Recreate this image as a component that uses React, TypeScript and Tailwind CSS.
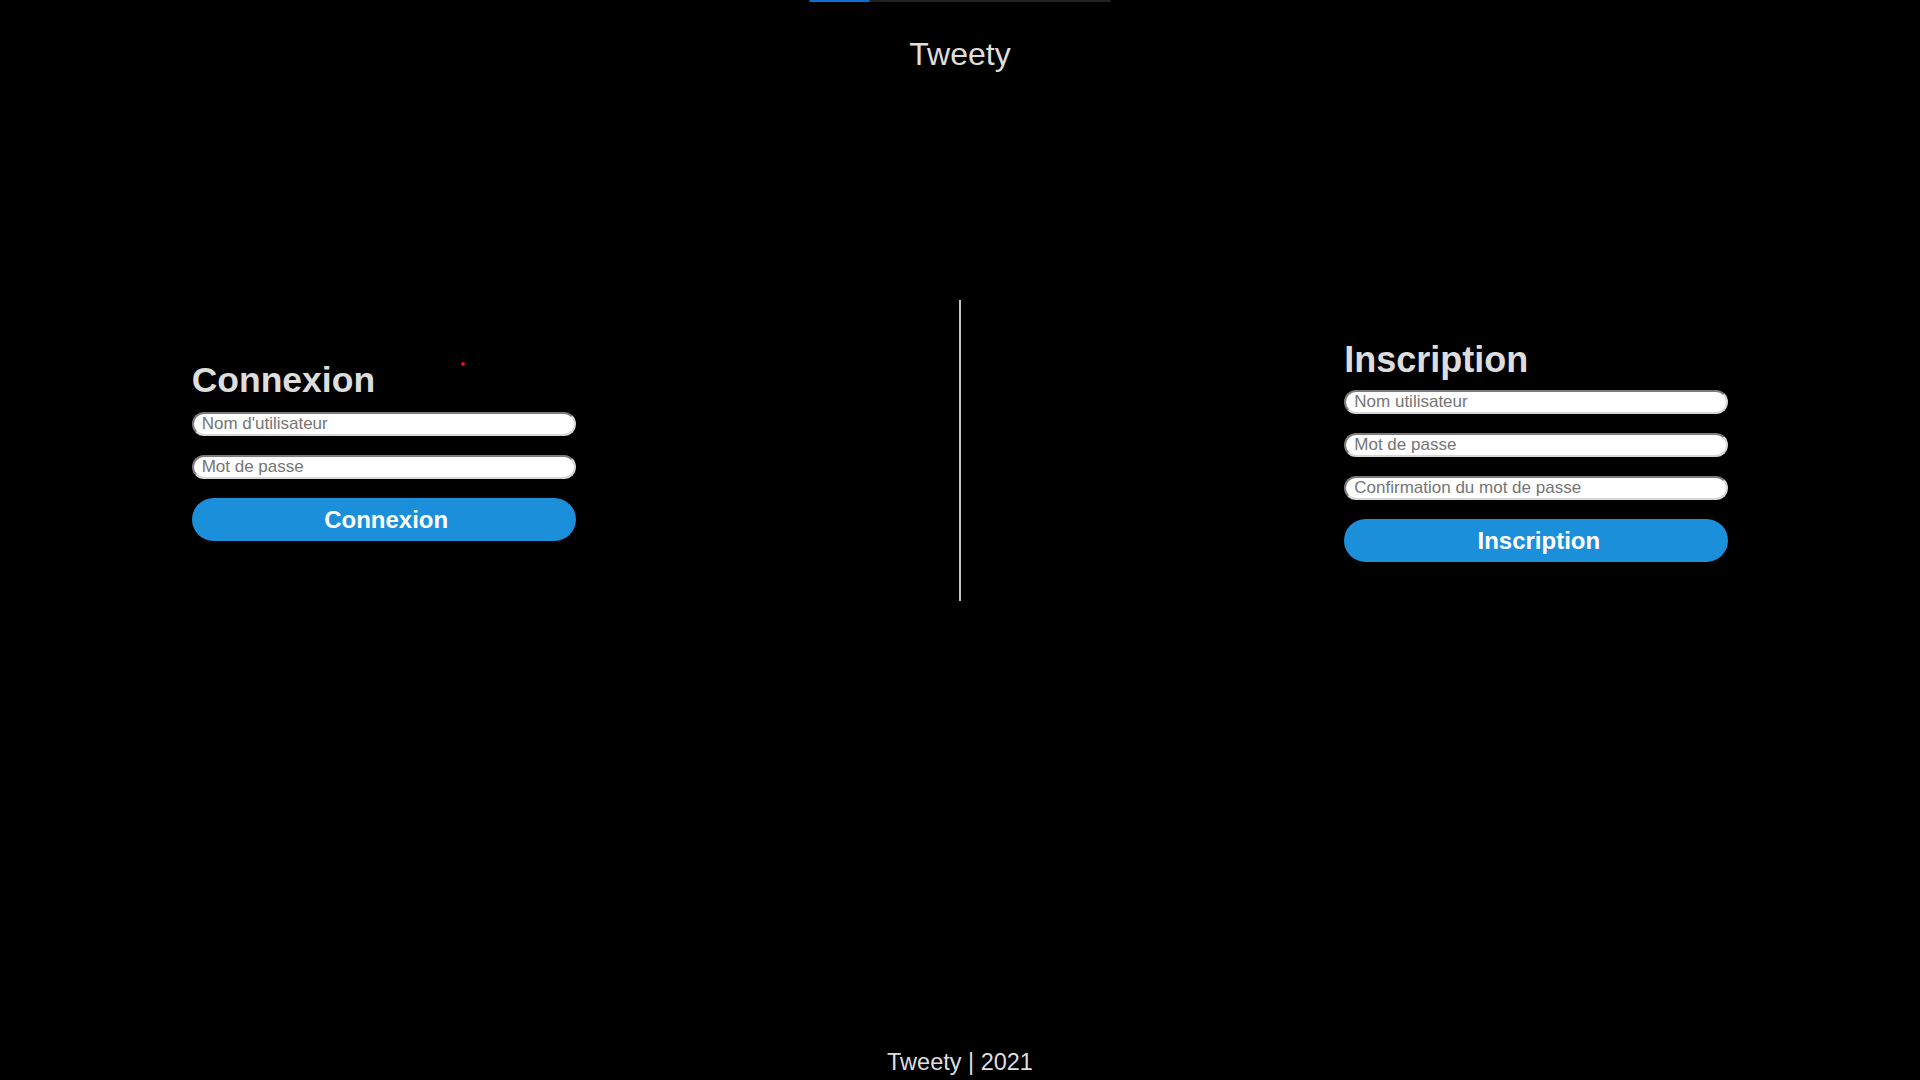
import React from 'react';

const inputClass =
  'w-full h-[24px] rounded-full bg-white px-2 text-[17px] text-black placeholder:text-[#757575] outline-none border-2 border-solid border-t-[#7d7d7d] border-l-[#7d7d7d] border-b-[#d6d6d6] border-r-[#d6d6d6]';

const buttonClass =
  'w-full h-[43px] rounded-full bg-[#1c8fdb] pl-[5px] text-white text-[24px] font-bold leading-none';

function LoginForm() {
  return (
    <form className="w-[384px] flex flex-col" onSubmit={(e) => e.preventDefault()}>
      <h2 className="mb-[11px] text-[35.5px] leading-[41px] font-bold text-[#dddddd]">Connexion</h2>
      <div className="flex flex-col gap-[19px]">
        <input className={inputClass} type="text" placeholder="Nom d'utilisateur" />
        <input className={inputClass} type="password" placeholder="Mot de passe" />
        <button className={buttonClass} type="submit">Connexion</button>
      </div>
    </form>
  );
}

function SignupForm() {
  return (
    <form className="w-[384px] flex flex-col" onSubmit={(e) => e.preventDefault()}>
      <h2 className="mb-[10px] text-[36px] leading-[41px] font-bold text-[#dddddd]">Inscription</h2>
      <div className="flex flex-col gap-[19px]">
        <input className={inputClass} type="text" placeholder="Nom utilisateur" />
        <input className={inputClass} type="password" placeholder="Mot de passe" />
        <input className={inputClass} type="password" placeholder="Confirmation du mot de passe" />
        <button className={buttonClass} type="submit">Inscription</button>
      </div>
    </form>
  );
}

export default function App() {
  return (
    <div
      className="relative h-screen w-full bg-black flex flex-col overflow-hidden"
      style={{ fontFamily: '"Liberation Sans", Arial, sans-serif' }}
    >
      {/* Loading bar */}
      <div className="absolute top-0 left-1/2 -translate-x-1/2 w-[301px] h-[2px] bg-[#222222]">
        <div className="h-full w-[60px] bg-[#0a6fd6]" />
      </div>

      {/* Header */}
      <header className="pt-[36px] text-center">
        <h1 className="text-[32px] leading-[37px] text-[#dedede]">Tweety</h1>
      </header>

      {/* Forms */}
      <main className="mt-[227px] h-[301px] flex items-center justify-around">
        <LoginForm />
        <div className="w-[2px] h-full bg-[#c4c4c4]" />
        <SignupForm />
      </main>

      <div className="absolute left-[461px] top-[362px] w-[4px] h-[4px] rounded-full bg-[#e01010]" />

      {/* Footer */}
      <footer className="mt-auto pb-[4px] text-center text-[23.5px] leading-[27px] text-[#dedede]">
        Tweety | 2021
      </footer>
    </div>
  );
}
